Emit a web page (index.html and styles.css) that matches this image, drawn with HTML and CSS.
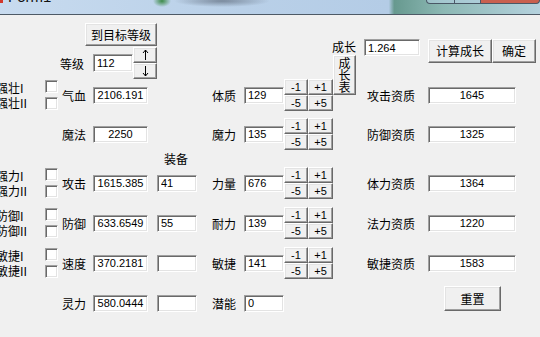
FILE: index.html
```html
<!doctype html>
<html>
<head>
<meta charset="utf-8">
<title>Form1</title>
<link rel="stylesheet" href="styles.css">
</head>
<body>
<div class="titlebar">
	<span class="ico"></span>
	<span class="caption">Form1</span>
	<div class="winbtns"><span class="wb wb-min"></span><span class="wb wb-max"></span><span class="wb wb-close"></span></div>
</div>
<div class="form">
	<div class="top">
		<div class="lvl">
			<input type="button" class="btn btn-target" value="到目标等级">
			<div class="lvl-row">
				<span class="lbl-lvl">等级</span>
				<input class="txt txt-lvl" value="112">
				<div class="spin">
					<button class="btn"><svg width="7" height="12" viewBox="0 0 7 12"><path d="M3.5 1V11M1 4L3.5 1L6 4" fill="none" stroke="#000" stroke-width="1"/></svg></button>
					<button class="btn"><svg width="7" height="12" viewBox="0 0 7 12"><path d="M3.5 1V11M1 8L3.5 11L6 8" fill="none" stroke="#000" stroke-width="1"/></svg></button>
				</div>
			</div>
		</div>
		<div class="grow">
			<span class="lbl-grow">成长</span>
			<button class="btn btn-table">成<br>长<br>表</button>
		</div>
		<div class="calc">
			<input class="txt txt-grow" value="1.264">
			<input type="button" class="btn btn-calc" value="计算成长">
			<input type="button" class="btn btn-ok" value="确定">
		</div>
	</div>

	<div class="row r1">
		<div class="chk"><div class="chk-txt">强壮I<br>强壮II</div><div class="chk-box"><input type="checkbox" class="cb"><input type="checkbox" class="cb"></div></div>
		<span class="lbl">气血</span>
		<input class="txt t1 c" value="2106.191">
		<span class="t2"></span>
		<span class="lbl2">体质</span>
		<input class="txt t3" value="129">
		<div class="pm"><input type="button" class="btn" value="-1"><input type="button" class="btn" value="+1"><input type="button" class="btn" value="-5"><input type="button" class="btn" value="+5"></div>
		<span class="lbl3">攻击资质</span>
		<input class="txt t4 c" value="1645">
	</div>

	<div class="row r2">
		<div class="chk"></div>
		<span class="lbl">魔法</span>
		<input class="txt t1 c" value="2250">
		<span class="t2"></span>
		<span class="lbl2">魔力</span>
		<input class="txt t3" value="135">
		<div class="pm"><input type="button" class="btn" value="-1"><input type="button" class="btn" value="+1"><input type="button" class="btn" value="-5"><input type="button" class="btn" value="+5"></div>
		<span class="lbl3">防御资质</span>
		<input class="txt t4 c" value="1325">
	</div>

	<div class="equip-head">装备</div>

	<div class="row r3">
		<div class="chk"><div class="chk-txt">强力I<br>强力II</div><div class="chk-box"><input type="checkbox" class="cb"><input type="checkbox" class="cb"></div></div>
		<span class="lbl">攻击</span>
		<input class="txt t1 c" value="1615.385">
		<input class="txt t2" value="41">
		<span class="lbl2">力量</span>
		<input class="txt t3" value="676">
		<div class="pm"><input type="button" class="btn" value="-1"><input type="button" class="btn" value="+1"><input type="button" class="btn" value="-5"><input type="button" class="btn" value="+5"></div>
		<span class="lbl3">体力资质</span>
		<input class="txt t4 c" value="1364">
	</div>

	<div class="row r4">
		<div class="chk"><div class="chk-txt">防御I<br>防御II</div><div class="chk-box"><input type="checkbox" class="cb"><input type="checkbox" class="cb"></div></div>
		<span class="lbl">防御</span>
		<input class="txt t1 c" value="633.6549">
		<input class="txt t2" value="55">
		<span class="lbl2">耐力</span>
		<input class="txt t3" value="139">
		<div class="pm"><input type="button" class="btn" value="-1"><input type="button" class="btn" value="+1"><input type="button" class="btn" value="-5"><input type="button" class="btn" value="+5"></div>
		<span class="lbl3">法力资质</span>
		<input class="txt t4 c" value="1220">
	</div>

	<div class="row r5">
		<div class="chk"><div class="chk-txt">敏捷I<br>敏捷II</div><div class="chk-box"><input type="checkbox" class="cb"><input type="checkbox" class="cb"></div></div>
		<span class="lbl">速度</span>
		<input class="txt t1 c" value="370.2181">
		<input class="txt t2" value="">
		<span class="lbl2">敏捷</span>
		<input class="txt t3" value="141">
		<div class="pm"><input type="button" class="btn" value="-1"><input type="button" class="btn" value="+1"><input type="button" class="btn" value="-5"><input type="button" class="btn" value="+5"></div>
		<span class="lbl3">敏捷资质</span>
		<input class="txt t4 c" value="1583">
	</div>

	<div class="row r6">
		<div class="chk"></div>
		<span class="lbl">灵力</span>
		<input class="txt t1 c" value="580.0444">
		<input class="txt t2" value="">
		<span class="lbl2">潜能</span>
		<input class="txt t3" value="0">
		<div class="pm"></div>
		<input type="button" class="btn btn-reset" value="重置">
	</div>
</div>
</body>
</html>
```

FILE: styles.css
```css
body,div,span,input,button{margin:0;padding:0;}
body{background:#f0f0f0;width:540px;height:337px;overflow:hidden;font:12px "Noto Sans CJK SC","Liberation Sans",sans-serif;color:#000;}
input,button{box-sizing:border-box;outline:none;}

/* title bar, mostly cut off at the top */
.titlebar{height:14px;border-bottom:1px solid #4e5a66;display:flex;overflow:hidden;
	background:
		radial-gradient(ellipse 9px 6px at 162px 1px,#3c8a48,rgba(60,138,72,0)),
		radial-gradient(ellipse 48px 6px at 222px 1px,rgba(70,80,95,.55),rgba(70,80,95,0)),
		linear-gradient(90deg,#c8dbef 0,#b9d0e8 45%,#b4cce6 72%,#67998f 73%,#8cb8b4 82%,#b5d2de 100%);}
.ico{width:3px;height:4px;background:#d2382c;margin-top:-1px;}
.caption{font:15px "Liberation Sans",sans-serif;line-height:15px;margin:-11px 0 0 5px;color:#111;}
.winbtns{display:flex;margin:-16px 0 0 auto;height:21px;}
.wb{height:19px;border:1px solid #4a5866;border-top:none;background:rgba(190,215,235,.5);}
.wb-min{width:27px;border-radius:0 0 0 4px;}
.wb-max{width:25px;border-left:none;}
.wb-close{width:58px;border-left:none;border-radius:0 0 4px 0;background:#c9604f;}

/* classic controls */
.btn{background:#f0f0f0;border:1px solid;border-color:#fff #696969 #696969 #fff;box-shadow:inset -1px -1px 0 #a0a0a0,inset 1px 1px 0 #e3e3e3;font:12px "Noto Sans CJK SC",sans-serif;color:#000;line-height:1;}
.txt{background:#fff;border:1px solid;border-color:#a0a0a0 #fff #fff #a0a0a0;box-shadow:inset 1px 1px 0 #696969,inset -1px -1px 0 #e3e3e3;height:17px;padding:0 3px;font:11px "Liberation Sans",sans-serif;color:#000;}
.c{text-align:center;}
.cb{-webkit-appearance:none;appearance:none;display:block;width:13px;height:13px;background:#fff;border:1px solid;border-color:#a0a0a0 #fff #fff #a0a0a0;box-shadow:inset 1px 1px 0 #696969,inset -1px -1px 0 #e3e3e3;}

/* top block */
.form{padding-top:0;}
.top{display:flex;align-items:flex-start;height:64px;}
.lvl{margin-left:60px;width:97px;}
.btn-target{display:block;margin:8px 0 0 25px;width:72px;height:23px;}
.lvl-row{display:flex;align-items:center;height:32px;margin-top:1px;}
.lbl-lvl{width:33px;}
.txt-lvl{width:40px;height:18px;}
.spin{width:24px;}
.spin .btn{display:flex;align-items:center;justify-content:center;width:24px;height:16px;}
.grow{margin:25px 0 0 175px;width:24px;}
.lbl-grow{display:block;line-height:13px;}
.btn-table{display:block;width:23px;height:40px;margin:2px 0 0 1px;line-height:12px;}
.calc{display:flex;align-items:flex-start;margin:24px 0 0 8px;}
.txt-grow{width:56px;}
.btn-calc{width:64px;height:24px;margin-left:8px;}
.btn-ok{width:44px;height:24px;}

/* rows */
.row{display:flex;align-items:center;height:32px;}
.r2{margin-top:7px;}
.r4,.r5{margin-top:8px;}
.r6{margin-top:7px;height:34px;}
.equip-head{height:17px;line-height:17px;padding-left:164px;}
.chk{display:flex;align-items:center;margin-left:-4px;width:62px;flex:none;}
.chk-txt{width:49px;line-height:15px;}
.chk-box{display:flex;flex-direction:column;gap:4px;}
.lbl{width:31px;margin-left:4px;}
.t1{width:55px;margin-right:9px;}
.t2{width:40px;height:17px;margin-right:15px;flex:none;}
.lbl2{width:32px;}
.t3{width:40px;}
.pm{display:grid;grid-template-columns:24px 25px;grid-template-rows:16px 16px;width:49px;flex:none;}
.pm .btn{font:11px "Liberation Sans",sans-serif;}
.lbl3{width:61px;margin-left:34px;}
.t4{width:88px;}
.btn-reset{align-self:flex-start;width:57px;height:25px;margin-left:111px;}
```
